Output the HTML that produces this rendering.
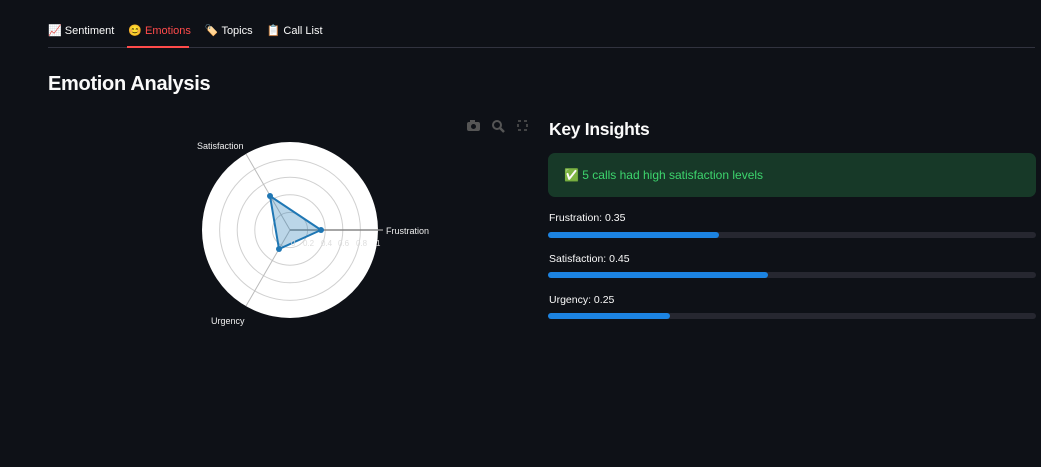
<!DOCTYPE html>
<html><head><meta charset="utf-8"><style>
body{margin:0;width:1041px;height:467px;background:#0e1117;color:#fafafa;font-family:"Liberation Sans","Noto Sans CJK SC",sans-serif;overflow:hidden;position:relative}
.tabs{position:absolute;left:48px;top:24px;font-size:11px;display:flex;gap:14px}
.tabs span{display:inline-block}
.line{position:absolute;left:48px;right:6px;top:47px;height:1px;background:#31333f}
.act{position:absolute;left:127px;top:46px;width:62px;height:2px;background:#ff4b4b}
h1{position:absolute;left:48px;top:73px;margin:0;font-size:20px;font-weight:bold;letter-spacing:-0.3px}
h2{position:absolute;left:549px;top:119px;margin:0;font-size:17.5px;font-weight:bold;letter-spacing:-0.3px}
.box{position:absolute;left:548px;top:153px;width:488px;height:44px;background:#173928;border-radius:7px;color:#3dd56d;font-size:12px;line-height:44px;padding-left:16px;box-sizing:border-box}
.lab{position:absolute;left:549px;font-size:10.5px}
.bar{position:absolute;left:548px;width:488px;height:6px;background:#262730;border-radius:3px}
.bar div{height:6px;background:#1c83e1;border-radius:3px}
</style></head><body>
<div class="tabs"><span>📈 Sentiment</span><span style="color:#ff4b4b">😊 Emotions</span><span>🏷️ Topics</span><span>📋 Call List</span></div>
<div class="line"></div><div class="act"></div>
<h1>Emotion Analysis</h1>
<svg style="position:absolute;left:0;top:0" width="540" height="340">
<g><rect x="467" y="122" width="13" height="9" rx="2" fill="#555"/><rect x="470" y="120" width="5" height="3" fill="#555"/><circle cx="473.5" cy="126.5" r="2.5" fill="#0e1117"/><circle cx="497" cy="125" r="4" fill="none" stroke="#555" stroke-width="2"/><line x1="500" y1="128" x2="504" y2="132" stroke="#555" stroke-width="2.5"/><rect x="518" y="121" width="9" height="9" fill="none" stroke="#555" stroke-width="1.5" stroke-dasharray="3 3"/></g>
<circle cx="290" cy="230" r="88" fill="#fff"/>
<g fill="none" stroke="#d0d0d0" stroke-width="1"><circle cx="290" cy="230" r="17.6"/><circle cx="290" cy="230" r="35.2"/><circle cx="290" cy="230" r="52.8"/><circle cx="290" cy="230" r="70.4"/></g>
<line x1="290" y1="230" x2="246" y2="154" stroke="#bbb"/><line x1="290" y1="230" x2="246" y2="306" stroke="#bbb"/>
<line x1="290" y1="230" x2="383" y2="230" stroke="#888" stroke-width="1.5"/>
<polygon points="321,230 270,196 279,249" fill="rgba(31,119,180,0.3)" stroke="#1f77b4" stroke-width="2"/>
<g fill="#1f77b4"><circle cx="321" cy="230" r="3"/><circle cx="270" cy="196" r="3"/><circle cx="279" cy="249" r="3"/></g>
<g fill="#eee" font-size="9" font-family="Liberation Sans"><text x="386" y="234">Frustration</text><text x="197" y="149">Satisfaction</text><text x="211" y="324">Urgency</text></g>
<g fill="#ddd" font-size="8"><text x="291" y="246">0</text><text x="303" y="246">0.2</text><text x="321" y="246">0.4</text><text x="338" y="246">0.6</text><text x="356" y="246">0.8</text><text x="376" y="246">1</text></g>
</svg>
<h2>Key Insights</h2>
<div class="box">✅ 5 calls had high satisfaction levels</div>
<div class="lab" style="top:212px">Frustration: 0.35</div><div class="bar" style="top:232px"><div style="width:171px"></div></div>
<div class="lab" style="top:253px">Satisfaction: 0.45</div><div class="bar" style="top:272px"><div style="width:220px"></div></div>
<div class="lab" style="top:294px">Urgency: 0.25</div><div class="bar" style="top:313px"><div style="width:122px"></div></div>
</body></html>
